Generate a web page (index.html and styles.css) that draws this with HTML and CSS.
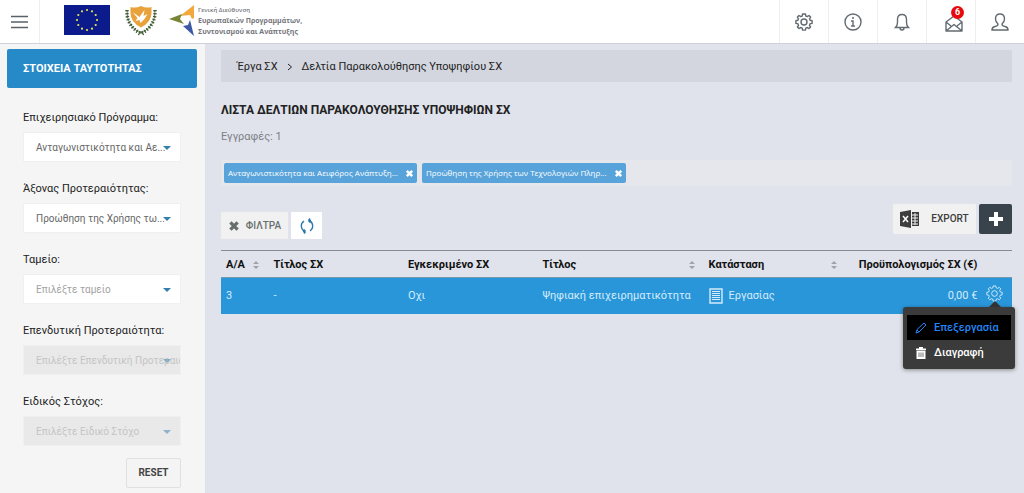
FILE: index.html
```html
<!DOCTYPE html>
<html lang="el">
<head>
<meta charset="utf-8">
<title>Δελτία Παρακολούθησης Υποψηφίου ΣΧ</title>
<link rel="stylesheet" href="styles.css">
</head>
<body>
<svg class="sprite" aria-hidden="true">
  <symbol id="gear" viewBox="0 0 18 18"><path d="M7.600 1h2.800l.4 2 1.500.6L14 2.500l1.600 1.600-1.100 1.700.6 1.500 2 .4v2.700l-2 .4-.6 1.500 1.100 1.700L14 15.600l-1.700-1.100-1.500.6-.4 2H7.600l-.4-2-1.500-.6L4 15.600 2.400 14l1.100-1.700-.6-1.500-2-.4V7.700l2-.4.6-1.500-1.100-1.700L4 2.500l1.700 1.100L7.200 3z" stroke-linejoin="round"/><circle cx="9" cy="9" r="3"/></symbol>
  <symbol id="cross" viewBox="0 0 10 10"><path d="M2 2l6 6M8 2l-6 6" stroke-width="2.800"/></symbol>
</svg>
<header class="topbar">
  <button class="menu-btn" aria-label="Μενού"><svg width="17" height="14" viewBox="0 0 17 14"><path d="M0 1.500h17M0 7h17M0 12.500h17"/></svg></button>
  <a class="brand" href="#" aria-label="Αρχική">
    <svg width="46" height="30" viewBox="0 0 46 30">
      <rect width="46" height="30" fill="#0b1b8c"/>
      <g fill="#e8e84a"><circle cx="23" cy="5" r="1.100"/><circle cx="28" cy="6.300" r="1.100"/><circle cx="31.700" cy="10" r="1.100"/><circle cx="33" cy="15" r="1.100"/><circle cx="31.700" cy="20" r="1.100"/><circle cx="28" cy="23.700" r="1.100"/><circle cx="23" cy="25" r="1.100"/><circle cx="18" cy="23.700" r="1.100"/><circle cx="14.300" cy="20" r="1.100"/><circle cx="13" cy="15" r="1.100"/><circle cx="14.300" cy="10" r="1.100"/><circle cx="18" cy="6.300" r="1.100"/></g>
    </svg>
    <svg class="crest" width="32" height="32" viewBox="0 0 32 32">
      <path d="M5.500 2q5.500 1.500 10.500-1 5 2.500 10.500 1v6q0 9-10.500 14.500Q5.500 17 5.500 8z" fill="#e9a23b"/>
      <path d="M7.500 7l7 5 5-7-1 6 4-2-3 5-4 4-1-3-4 1 2-3z" fill="#fff"/>
      <g fill="none" stroke="#3d5a34"><path d="M2 5Q1 20 15 28M30 5Q31 20 17 28" stroke-width=".8"/><path d="M2 5Q1 20 15 28M30 5Q31 20 17 28" stroke-width="3.400" stroke-dasharray="1.300 1.700"/><path d="M13 30l5-4M19 30l-5-4"/></g>
    </svg>
    <svg width="26" height="32" viewBox="0 0 26 32">
      <path d="M25 0L11 11l10-1 2 4 2-1z" fill="#f2a83a"/><path d="M0 14l13-5-2 5 4 5z" fill="#788536"/><path d="M14 21l5-1 2-5 4 16z" fill="#3d58a5"/>
    </svg>
    <span class="brand-text"><small>Γενική Διεύθυνση</small><b>Ευρωπαϊκών Προγραμμάτων,</b><b>Συντονισμού και Ανάπτυξης</b></span>
  </a>
  <nav class="tools">
    <button aria-label="Ρυθμίσεις"><svg width="18" height="18"><use href="#gear"/></svg></button>
    <button aria-label="Πληροφορίες"><svg width="18" height="18" viewBox="0 0 18 18"><circle cx="9" cy="9" r="8"/><path d="M7 8h2v5M7 13h4M8 5h2"/></svg></button>
    <button aria-label="Ειδοποιήσεις"><svg width="18" height="18" viewBox="0 0 18 18"><path d="M2.500 14.500q2-2 2-5V6.500q0-5 4.500-5t4.500 5v3q0 3 2 5zM7 15q0 2 2 2t2-2"/></svg></button>
    <button class="mail" aria-label="Μηνύματα"><svg width="18" height="18" viewBox="0 0 18 18"><path d="M1 8l8-6 8 6v9H1zM1 8l5 4M17 8l-5 4M1 17l8-6.500 8 6.500" stroke-linejoin="round"/></svg><span class="badge">6</span></button>
    <button aria-label="Χρήστης"><svg width="18" height="18" viewBox="0 0 18 18"><path d="M1 17q0-3 3-3.500 3-.5 3-2.500-2.500-2-2.500-5Q4.500 1 9 1t4.500 5q0 3-2.500 5 0 2 3 2.500 3 .5 3 3.500z"/></svg></button>
  </nav>
</header>
<div class="layout">
  <aside class="sidebar">
    <h2>ΣΤΟΙΧΕΙΑ ΤΑΥΤΟΤΗΤΑΣ</h2>
    <form class="filters">
      <div class="field"><label for="f1">Επιχειρησιακό Πρόγραμμα:</label><div class="select"><select id="f1"><option>Ανταγωνιστικότητα και Αε...</option></select></div></div>
      <div class="field"><label for="f2">Άξονας Προτεραιότητας:</label><div class="select"><select id="f2"><option>Προώθηση της Χρήσης τω...</option></select></div></div>
      <div class="field"><label for="f3">Ταμείο:</label><div class="select"><select id="f3" class="empty"><option>Επιλέξτε ταμείο</option></select></div></div>
      <div class="field"><label for="f4">Επενδυτική Προτεραιότητα:</label><div class="select off"><select id="f4" disabled><option>Επιλέξτε Επενδυτική Προτεραιότητα</option></select></div></div>
      <div class="field"><label for="f5">Ειδικός Στόχος:</label><div class="select off"><select id="f5" disabled><option>Επιλέξτε Ειδικό Στόχο</option></select></div></div>
      <button type="reset" class="reset">RESET</button>
    </form>
  </aside>
  <main class="content">
    <nav class="crumbs"><a href="#">Έργα ΣΧ</a><svg width="6" height="8" viewBox="0 0 6 8"><path d="M1 1l3.500 3L1 7"/></svg><a href="#">Δελτία Παρακολούθησης Υποψηφίου ΣΧ</a></nav>
    <h1>ΛΙΣΤΑ ΔΕΛΤΙΩΝ ΠΑΡΑΚΟΛΟΥΘΗΣΗΣ ΥΠΟΨΗΦΙΩΝ ΣΧ</h1>
    <p class="count">Εγγραφές: 1</p>
    <div class="tags">
      <span class="tag">Ανταγωνιστικότητα και Αειφόρος Ανάπτυξη...<button aria-label="Αφαίρεση"><svg width="9" height="9"><use href="#cross"/></svg></button></span>
      <span class="tag">Προώθηση της Χρήσης των Τεχνολογιών Πληρ...<button aria-label="Αφαίρεση"><svg width="9" height="9"><use href="#cross"/></svg></button></span>
    </div>
    <div class="actions">
      <button class="btn clear"><svg width="12" height="12"><use href="#cross"/></svg>ΦΙΛΤΡΑ</button>
      <button class="btn refresh" aria-label="Ανανέωση"><svg width="14" height="16" viewBox="0 0 14 16"><path d="M5.500 13.500A5.700 5.700 0 0 1 4 3.200M8.500 2.500A5.700 5.700 0 0 1 10 12.800M8.500 2.500h2.500M8.500 2.500l1.800 2M8.500 2.500L10 .5M5.500 13.500H3M5.500 13.500l-1.800-2M5.500 13.500L4 15.500"/></svg></button>
      <button class="btn export"><svg width="19" height="18" viewBox="0 0 19 18"><path d="M0 2l11-2v18L0 16z"/><path d="M12 2h7v14h-7z"/><path d="M3 6l5 6M8 6l-5 6" stroke="#fff" stroke-width="1.500"/><path d="M12 5h6M12 8h6M12 11h6M12 14h6M15 3v12" stroke="#f4f4f4"/></svg>EXPORT</button>
      <button class="add" aria-label="Προσθήκη"><svg width="14" height="14" viewBox="0 0 14 14"><path d="M7 0v14M0 7h14"/></svg></button>
    </div>
    <table class="list">
      <colgroup><col class="c1"><col class="c2"><col class="c3"><col class="c4"><col class="c5"><col class="c6"><col class="c7"></colgroup>
      <thead><tr>
        <th><span class="sort">A/A<svg width="6" height="8" viewBox="0 0 6 8"><path d="M0 3l3-3 3 3zM0 5l3 3 3-3z"/></svg></span></th>
        <th>Τίτλος ΣΧ</th><th>Εγκεκριμένο ΣΧ</th>
        <th><span class="sort">Τίτλος<svg width="6" height="8" viewBox="0 0 6 8"><path d="M0 3l3-3 3 3zM0 5l3 3 3-3z"/></svg></span></th>
        <th><span class="sort">Κατάσταση<svg width="6" height="8" viewBox="0 0 6 8"><path d="M0 3l3-3 3 3zM0 5l3 3 3-3z"/></svg></span></th>
        <th class="num">Προϋπολογισμός ΣΧ (€)</th><th></th>
      </tr></thead>
      <tbody><tr>
        <td>3</td><td>-</td><td>Οχι</td><td>Ψηφιακή επιχειρηματικότητα</td>
        <td><span class="status"><svg width="14" height="16" viewBox="0 0 14 16"><path d="M1 1h12v14H1z" stroke-width="1.400"/><path d="M3 3.500h8M3 5.500h8M3 7.500h8M3 9.500h8M3 11.500h8" stroke-width="1"/></svg>Εργασίας</span></td>
        <td class="num">0,00 €</td>
        <td class="ops"><button aria-label="Ενέργειες"><svg width="17" height="17" viewBox="0 0 18 18"><use href="#gear"/></svg></button>
          <div class="menu">
            <button class="on"><svg width="12" height="12" viewBox="0 0 12 12"><path d="M1 11l1-3.500L9 1l2 2-7 7zM2 8l2 2"/></svg>Επεξεργασία</button>
            <button><svg width="12" height="12" viewBox="0 0 12 12"><path class="solid" d="M1 1.500h3V0h4v1.500h3V3H1zM1.500 3.500h9V12h-9z"/><path d="M4 5.500v4.500M6 5.500v4.500M8 5.500v4.500" stroke="#555" stroke-width=".8"/></svg>Διαγραφή</button>
          </div></td>
      </tr></tbody>
    </table>
  </main>
</div>
</body>
</html>
```
FILE: styles.css
```css
* { box-sizing: border-box; }
body { margin: 0; min-height: 100vh; display: flex; flex-direction: column; background: #e0e3eb; color: #222; font: 11px/16px Roboto, "Noto Sans", sans-serif; }
button { font: inherit; color: inherit; border: 0; padding: 0; background: none; cursor: pointer; }
a { color: inherit; text-decoration: none; }
svg { display: block; flex: none; fill: none; stroke: currentColor; }
.sprite { position: absolute; width: 0; height: 0; }
.topbar { display: flex; height: 44px; background: #fff; border-bottom: 1px solid #cdd1d8; }
.menu-btn { width: 40px; padding-left: 11px; border-right: 1px solid #eee; color: #596268; }
.menu-btn svg { stroke-width: 1.500; }
.brand { display: flex; align-items: flex-start; padding: 5px 0 0 24px; }
.brand svg { stroke: none; }
.crest { margin: 0 12px 0 15px; }
.brand-text { display: flex; flex-direction: column; margin-left: 3px; color: #74757b; font-family: "Open Sans", sans-serif; font-size: 7px; line-height: 11px; }
.brand-text b { font-weight: 700; }
.brand-text small { font-size: 6px; line-height: 10px; font-weight: 600; }
.tools { display: flex; margin-left: auto; }
.tools button { position: relative; width: 49px; display: flex; align-items: center; justify-content: center; border-left: 1px solid #eee; color: #636b70; }
.tools svg { stroke-width: 1.400; }
.tools .mail { padding-top: 2px; padding-left: 5px; }
.badge { position: absolute; top: 6px; left: 24px; width: 13px; height: 13px; border-radius: 50%; background: #e8090e; color: #fff; font-weight: 700; font-size: 9px; line-height: 13px; text-align: center; }
.layout { display: flex; flex: 1; }
.sidebar { flex: none; width: 205px; padding: 5px 8px 6px 7px; background: #f5f5f5; }
.sidebar h2 { margin: 0; padding: 12px 16px; height: 39px; border-radius: 2px; background: #258ac7; color: #fff; font-size: 11px; line-height: 16px; }
.filters { display: flex; flex-direction: column; padding: 22px 16px 0; }
.field { margin-bottom: 19px; }
.field label { display: block; margin-bottom: 6px; }
.select { position: relative; background: #fff; }
.select::after { content: ""; position: absolute; right: 10px; top: 14px; border: 4px solid transparent; border-top-color: #337fae; border-bottom: 0; pointer-events: none; }
.select select { appearance: none; display: block; width: 100%; height: 30px; padding: 1px 0 0 12px; border: 1px solid #f0f0f0; background: none; color: #666; font: 10px/16px Roboto, sans-serif; opacity: 1; }
.select .empty { color: #a2a2a2; }
.select.off { background: #e9e9e9; }
.select.off::after { opacity: .5; }
.select.off select { color: #c4c4c4; }
.reset { align-self: flex-end; margin-top: -7px; width: 55px; height: 30px; border: 1px solid #e0e0e0; border-radius: 2px; background: #f4f4f4; color: #444; font-size: 10px; font-weight: 700; }
.content { flex: 1; min-width: 0; padding: 6px 12px 20px 16px; }
.crumbs { display: flex; align-items: center; gap: 9px; height: 32px; padding: 1px 0 0 16px; background: #d3d6df; }
h1 { margin: 20px 0 11px; font-size: 12px; line-height: 16px; font-weight: 700; }
.count { margin: 0 0 15px; color: #7d8088; }
.tags { display: flex; gap: 5px; padding: 3px; background: #e6e7ec; }
.tag { display: flex; align-items: center; gap: 7px; height: 20px; padding: 0 3px 0 4px; border-radius: 2px; background: #58a4da; color: #fff; font-family: "Open Sans", sans-serif; font-size: 8px; }
.actions { display: flex; align-items: flex-end; gap: 3px; height: 35px; margin-top: 18px; }
.btn { display: flex; align-items: center; justify-content: center; gap: 6px; height: 27px; background: #f1f1f2; font-weight: 500; border-radius: 1px; }
.clear { width: 67px; color: #68706e; font-size: 10px; }
.refresh { width: 31px; background: #fff; color: #2878ac; }
.refresh svg { stroke-width: 1.400; }
.export { width: 83px; height: 30px; margin-left: auto; gap: 12px; color: #3d3d3d; align-self: flex-start; font-size: 10px; }
.export svg { fill: #3d3d3d; stroke: none; }
.add { display: flex; align-items: center; justify-content: center; width: 33px; height: 30px; align-self: flex-start; border-radius: 2px; background: #38434c; color: #fff; }
.add svg { stroke-width: 4; }
.list { width: 100%; margin-top: 11px; border-collapse: collapse; table-layout: fixed; border-top: 1px solid #888b93; }
.list th, .list td { padding: 0 5px; text-align: left; white-space: nowrap; }
.list th { height: 27px; padding-top: 2px; color: #111; border-bottom: 1px solid #7999b0; }
.list td { height: 36px; background: #2996da; color: #d5ecfb; }
.list .num { text-align: right; padding-right: 3px; }
.c1 { width: 46px; } .c2 { width: 17%; } .c3 { width: 17%; } .c4 { width: 21%; } .c5 { width: 18%; } .c6 { width: 17%; } .c7 { width: 4%; }
.sort { display: flex; align-items: center; justify-content: space-between; padding-right: 4px; }
.sort svg { fill: #a0a2a8; stroke: none; }
.status { display: flex; align-items: center; gap: 6px; }
.list .ops { position: relative; padding: 0 0 0 6px; }
.menu { position: absolute; z-index: 2; right: -3px; top: 29px; width: 112px; padding: 8px 4px 4px; border-radius: 3px; background: #3b3b3b; box-shadow: 0 1px 4px #0006; }
.menu::before { content: ""; position: absolute; right: 14px; top: -6px; border: 6px solid transparent; border-top: 0; border-bottom-color: #333; }
.menu button { display: flex; align-items: center; gap: 7px; width: 100%; height: 25px; padding-left: 8px; color: #fff; font-weight: 500; }
.menu .on { background: #000; color: #2385f5; }
.solid { fill: #fff; stroke: none; }
```
